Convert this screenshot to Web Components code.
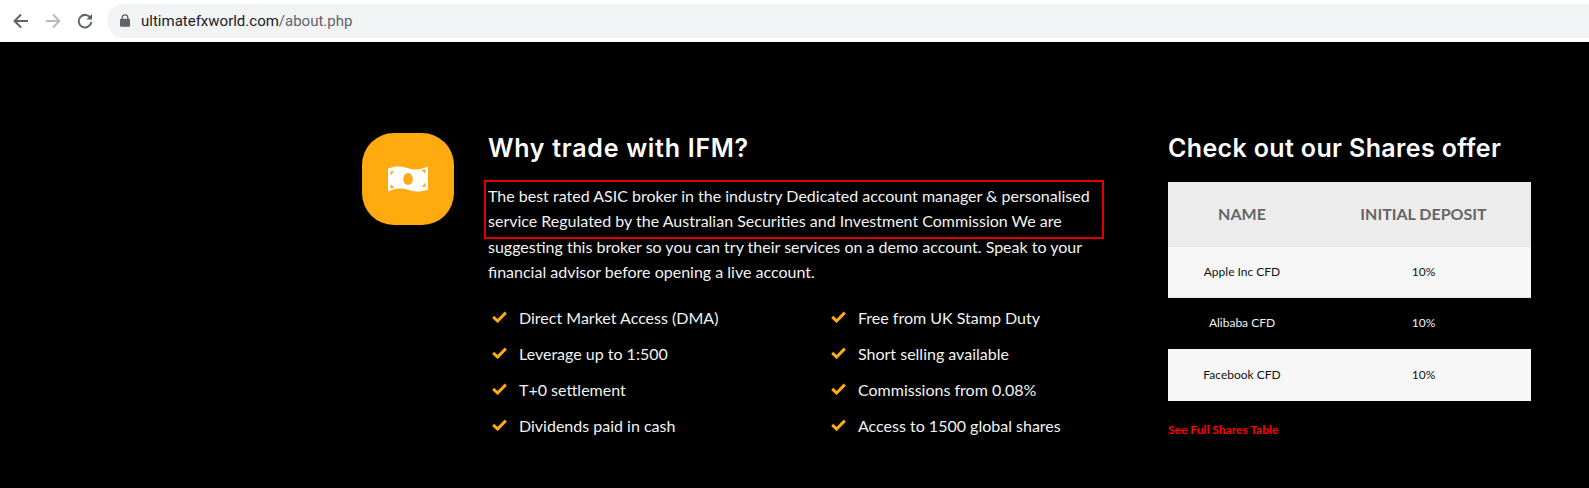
<!DOCTYPE html>
<html lang="en">
<head>
<meta charset="utf-8">
<title>About</title>
<style>
  html, body { margin: 0; padding: 0; background: #000; }
  body { font-family: "Lato", "Liberation Sans", sans-serif; color: #f2f2f2; overflow: hidden; }
</style>
</head>
<body>
<browser-bar host="ultimatefxworld.com" path="/about.php"></browser-bar>
<offer-section>
  <icon-tile slot="icon"></icon-tile>
  <section-heading slot="title" style="--track: .72px">Why trade with IFM?</section-heading>
  <marked-text slot="text">The best rated ASIC broker in the industry Dedicated account manager &amp; personalised service Regulated by the Australian Securities and Investment Commission We are suggesting this broker so you can try their services on a demo account. Speak to your financial advisor before opening a live account.</marked-text>
  <feature-list slot="features">
    <feature-item>Direct Market Access (DMA)</feature-item>
    <feature-item>Free from UK Stamp Duty</feature-item>
    <feature-item>Leverage up to 1:500</feature-item>
    <feature-item>Short selling available</feature-item>
    <feature-item>T+0 settlement</feature-item>
    <feature-item>Commissions from 0.08%</feature-item>
    <feature-item>Dividends paid in cash</feature-item>
    <feature-item>Access to 1500 global shares</feature-item>
  </feature-list>
  <section-heading slot="aside-title" style="--track: .36px">Check out our Shares offer</section-heading>
  <shares-table slot="aside"></shares-table>
</offer-section>

<script>
'use strict';

class BrowserBar extends HTMLElement {
  constructor() {
    super();
    let root = this.attachShadow({ mode: 'open' });
    root.innerHTML = `
      <style>
        :host { display: flex; align-items: center; height: 42px; background: #fff; }
        .nav { display: flex; width: 107px; flex: none; padding-left: 12px; box-sizing: border-box; gap: 14px; }
        svg { display: block; }
        .url {
          flex: 1; height: 34px; margin-top: -1px; display: flex; align-items: center;
          background: #f1f3f4; border-radius: 17px 0 0 17px; padding-left: 13px;
          font: 15px "Roboto", "Liberation Sans", sans-serif; color: #5f6368;
        }
        .url svg { margin-right: 11px; }
        b { font-weight: 400; color: #202124; }
      </style>
      <div class="nav">
        <svg width="18" height="18" viewBox="0 0 18 18" fill="none" stroke="#5f6368" stroke-width="2"><path d="M16 9H3M9 2.5 2.6 9 9 15.5"/></svg>
        <svg width="18" height="18" viewBox="0 0 18 18" fill="none" stroke="#b9bbbe" stroke-width="2"><path d="M2 9h13M9 2.5 15.4 9 9 15.5"/></svg>
        <svg width="18" height="18" viewBox="0 0 18 18" fill="none" stroke="#5f6368" stroke-width="2"><path d="M14.6 6.2A6.3 6.3 0 1 0 15.3 10"/><path d="M16 2v5.6h-5.6z" fill="#5f6368" stroke="none"/></svg>
      </div>
      <div class="url">
        <svg width="10" height="13" viewBox="0 0 10 13"><path d="M2.2 5V3.6a2.8 2.8 0 0 1 5.6 0V5" fill="none" stroke="#5f6368" stroke-width="1.3"/><rect y="4.8" width="10" height="8" rx="1.2" fill="#5f6368"/></svg>
        <span><b>${this.getAttribute('host')}</b>${this.getAttribute('path')}</span>
      </div>`;
  }
}

class OfferSection extends HTMLElement {
  constructor() {
    super();
    let root = this.attachShadow({ mode: 'open' });
    root.innerHTML = `
      <style>
        :host { display: flex; padding: 91px 0 0 362px; background: #000; height: 446px; box-sizing: border-box; }
        .tile { flex: none; width: 126px; }
        .main { flex: none; width: 680px; }
        .aside { flex: none; width: 363px; }
        .text { display: block; margin-top: 20px; }
        .features { display: block; margin-top: 15px; }
        .table { display: block; margin-top: 19px; }
      </style>
      <div class="tile"><slot name="icon"></slot></div>
      <div class="main">
        <slot name="title"></slot>
        <div class="text"><slot name="text"></slot></div>
        <div class="features"><slot name="features"></slot></div>
      </div>
      <div class="aside">
        <slot name="aside-title"></slot>
        <div class="table"><slot name="aside"></slot></div>
      </div>`;
  }
}

class IconTile extends HTMLElement {
  constructor() {
    super();
    let root = this.attachShadow({ mode: 'open' });
    root.innerHTML = `
      <style>
        :host { display: flex; align-items: center; justify-content: center; width: 92px; height: 92px; border-radius: 32px; background: #ffab0f; }
        svg { display: block; }
      </style>
      <svg width="42" height="28" viewBox="0 0 42 28">
        <path fill="#fff" d="M1 3.5C9 .5 14 1 21 3.2S33 5 41 1.5V24.5C33 27.5 28 27 21 24.8S9 23 1 26.5Z"/>
        <ellipse cx="21" cy="14" rx="4.8" ry="6" fill="#ffab0f"/>
        <g fill="#ffab0f">
          <path d="M3.5 6.5 7.5 6 3.5 10.5Z"/>
          <path d="M38.5 4.5 34.5 5 38.5 9Z"/>
          <path d="M3.5 19 7.5 23 3.5 23.5Z"/>
          <path d="M38.5 17.5 38.5 21.5 34.5 22Z"/>
        </g>
      </svg>`;
  }
}

class SectionHeading extends HTMLElement {
  constructor() {
    super();
    let root = this.attachShadow({ mode: 'open' });
    root.innerHTML = `
      <style>
        :host { display: block; font: 600 25px/30px "Inter", "Open Sans", sans-serif; letter-spacing: var(--track, 0); color: #fff; white-space: nowrap; }
      </style>
      <slot></slot>`;
  }
}

// Paragraph with the red annotation box drawn over its first two lines.
class MarkedText extends HTMLElement {
  constructor() {
    super();
    let root = this.attachShadow({ mode: 'open' });
    root.innerHTML = `
      <style>
        :host { display: block; position: relative; font-size: 16px; line-height: 25.4px; width: 620px; color: #f2f2f2; }
        .mark { position: absolute; left: -4px; top: -3px; width: 616px; height: 55px; border: 2px solid #e00000; pointer-events: none; }
      </style>
      <slot></slot>
      <div class="mark"></div>`;
  }
}

class FeatureList extends HTMLElement {
  constructor() {
    super();
    let root = this.attachShadow({ mode: 'open' });
    root.innerHTML = `
      <style>
        :host { display: grid; grid-template-columns: 339px 1fr; grid-auto-rows: 36px; }
      </style>
      <slot></slot>`;
  }
}

class FeatureItem extends HTMLElement {
  constructor() {
    super();
    let root = this.attachShadow({ mode: 'open' });
    root.innerHTML = `
      <style>
        :host { display: flex; align-items: center; font-size: 16px; color: #f2f2f2; padding-left: 4px; gap: 12px; }
        svg { display: block; flex: none; margin-top: -2px; }
      </style>
      <svg width="15" height="12" viewBox="0 0 15 12" fill="none" stroke="#ffab0f" stroke-width="3"><path d="M1.2 5.8 5.6 10 13.8 1.6"/></svg>
      <slot></slot>`;
  }
}

class SharesTable extends HTMLElement {
  constructor() {
    super();
    let root = this.attachShadow({ mode: 'open' });
    let rows = [
      ['Apple Inc CFD', '10%'],
      ['Alibaba CFD', '10%'],
      ['Facebook CFD', '10%'],
    ];
    root.innerHTML = `
      <style>
        :host { display: block; }
        .row { display: grid; grid-template-columns: 148px 215px; align-items: center; text-align: center; height: 51px; padding-bottom: 1px; font-size: 12px; color: #111; background: #f7f7f7; border-bottom: 1px solid #e6e6e6; box-sizing: border-box; }
        .row.alt { background: #000; color: #f2f2f2; border-bottom-color: #000; }
        .row.last { height: 52px; border-bottom-color: #f7f7f7; }
        .row.head { height: 65px; background: #ececec; color: #666; font-size: 16px; font-weight: 700; }
        a { display: block; margin-top: 21px; font-size: 12px; font-weight: 700; color: #f00; text-decoration: none; }
      </style>
      <div class="row head"><span>NAME</span><span>INITIAL DEPOSIT</span></div>
      ${rows.map((r, i) => `<div class="row${i == 1 ? ' alt' : ''}${i == 2 ? ' last' : ''}"><span>${r[0]}</span><span>${r[1]}</span></div>`).join('')}
      <a href="#">See Full Shares Table</a>`;
  }
}

customElements.define('browser-bar', BrowserBar);
customElements.define('offer-section', OfferSection);
customElements.define('icon-tile', IconTile);
customElements.define('section-heading', SectionHeading);
customElements.define('marked-text', MarkedText);
customElements.define('feature-list', FeatureList);
customElements.define('feature-item', FeatureItem);
customElements.define('shares-table', SharesTable);
</script>
</body>
</html>
